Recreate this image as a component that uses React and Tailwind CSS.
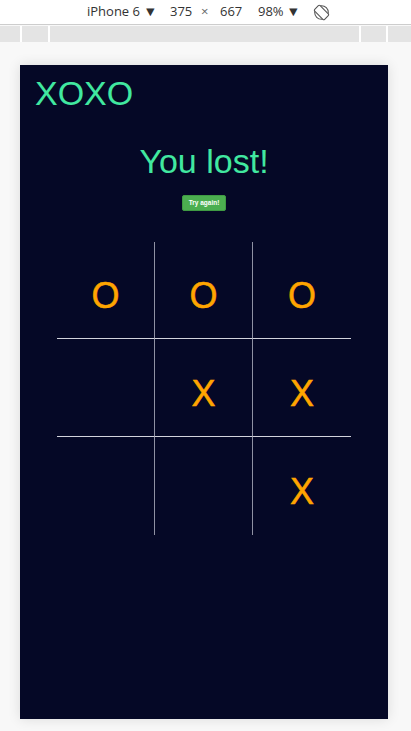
import React from 'react';

const board = [
  ['O', 'O', 'O'],
  ['', 'X', 'X'],
  ['', '', 'X'],
];

function RotateIcon() {
  return (
    <svg width="17" height="17" viewBox="0 0 16 16" fill="none" stroke="#555" strokeWidth="1">
      <circle cx="8" cy="8" r="6.4" />
      <g transform="rotate(-45 8 8)">
        <rect x="4.4" y="1.4" width="7.2" height="13.2" rx="1.2" fill="#fff" />
      </g>
    </svg>
  );
}

function Toolbar() {
  return (
    <div className="font-['Open_Sans','Liberation_Sans',sans-serif] text-[13px] text-[#333]">
      <div className="h-[25px] bg-white border-b border-[#cdcdcd] flex items-center pl-[87px]">
        <span className="w-[83px] flex items-center">iPhone 6 <span className="text-[13px] ml-[4px] scale-x-110">▼</span></span>
        <span className="w-[31px]">375</span>
        <span className="w-[19px] text-[#666]">×</span>
        <span className="w-[38px]">667</span>
        <span className="w-[55px] flex items-center">98% <span className="text-[13px] ml-[3px] scale-x-110">▼</span></span>
        <RotateIcon />
      </div>
      <div className="mt-[1px] h-[16px] flex gap-[2px] bg-white">
        <div className="w-[20px] bg-[#e4e4e4]" />
        <div className="w-[26px] bg-[#e4e4e4]" />
        <div className="w-[309px] bg-[#e4e4e4]" />
        <div className="w-[25px] bg-[#e4e4e4]" />
        <div className="flex-1 bg-[#e4e4e4]" />
      </div>
    </div>
  );
}

function Board() {
  return (
    <div className="mx-auto mt-[31px] w-[294px] grid grid-cols-[98px_98px_98px] grid-rows-[97px_98px_98px]">
      {board.map((row, r) =>
        row.map((cell, c) => (
          <div
            key={r + '-' + c}
            className={
              'flex items-center justify-center pt-[12px] text-[36px] leading-none text-[#ffa500] [-webkit-text-stroke:0.5px_#ffa500] ' +
              (c < 2 ? 'border-r-[1.5px] border-r-[#8f91a3] ' : '') +
              (r < 2 ? 'border-b border-b-[#d2d3dc]' : '')
            }
          >
            {cell}
          </div>
        ))
      )}
    </div>
  );
}

export default function App() {
  return (
    <div className="h-[731px] bg-[#f8f8f8] overflow-hidden">
      <Toolbar />
      <div className="ml-[20px] mt-[23px] w-[368px] h-[654px] bg-[#050826] shadow-[0_0_12px_rgba(0,0,0,0.12)] font-['Liberation_Sans',Arial,sans-serif] flex flex-col">
        <div className="pl-[15px] pt-[11px] text-[34px] leading-none text-[#41e8a0]">XOXO</div>
        <div className="mt-[34px] text-center text-[34px] leading-none text-[#41e8a0]">You lost!</div>
        <div className="mt-[17px] flex justify-center">
          <button className="w-[44px] h-[16px] bg-[#4caf50] border border-[#3f9a43] rounded-[2px] text-white text-[6.5px] font-bold leading-none">
            Try again!
          </button>
        </div>
        <Board />
      </div>
    </div>
  );
}
